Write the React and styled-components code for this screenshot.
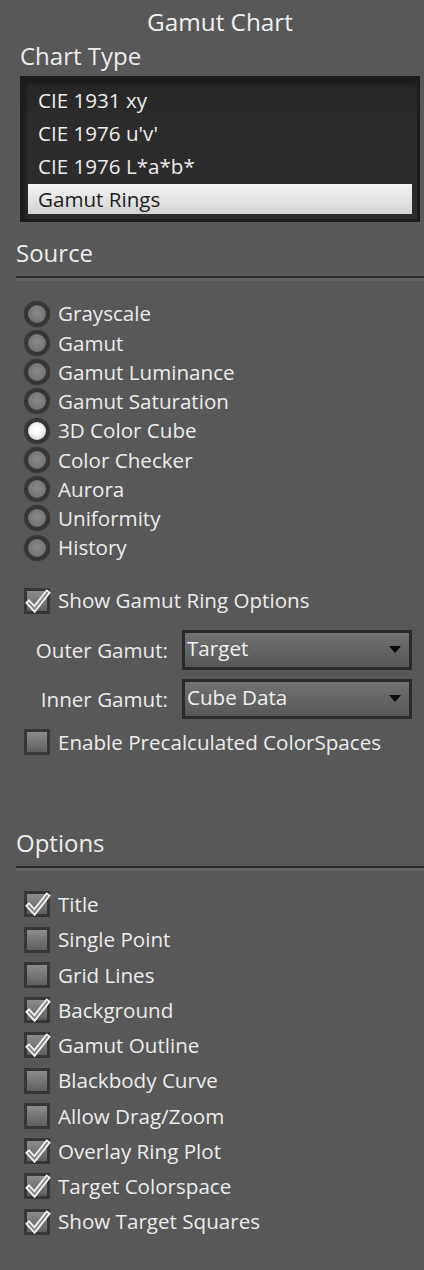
import React from "react";
import styled, { createGlobalStyle } from "styled-components";

const GlobalStyle = createGlobalStyle`
  html, body { margin: 0; padding: 0; background: #585858; }
  body { font-family: "Open Sans", Lato, sans-serif; color: #ececec; }
`;

const Panel = styled.div`
  width: 424px;
  min-height: 1270px;
  display: flex;
  flex-direction: column;
  background: #585858;
`;

const Title = styled.div`
  height: 44px;
  line-height: 44px;
  padding-left: 16px;
  text-align: center;
  font-size: 24.3px;
  color: #f0f0f0;
`;

const SubHeading = styled.div`
  height: 24px;
  line-height: 24px;
  padding-left: 20px;
  font-size: 24px;
`;

const ListBox = styled.div`
  margin: 8px 4px 0 20px;
  height: 146px;
  box-sizing: border-box;
  border: 3px solid #1c1c1c;
  background: linear-gradient(180deg, #242424 0%, #2c2c2c 30%, #2c2c2c 100%);
  box-shadow: inset 3px 3px 4px rgba(0, 0, 0, 0.35);
  padding: 6px 5px 0 5px;
  display: flex;
  flex-direction: column;
  gap: 3px;
`;

const ListItem = styled.div`
  height: 30px;
  line-height: 30px;
  padding-left: 10px;
  font-size: 20.6px;
  color: ${(p) => (p.$selected ? "#1e1e1e" : "#ececec")};
  background: ${(p) =>
    p.$selected ? "linear-gradient(180deg, #f4f4f4 0%, #d4d4d4 100%)" : "transparent"};
`;

const SectionHeader = styled.div`
  margin-top: ${(p) => p.$top}px;
  height: 30px;
  line-height: 30px;
  padding-left: 16px;
  font-size: 24px;
`;

const Rule = styled.div`
  margin: 8px 0 0 16px;
  height: 2px;
  background: #2c2c2c;
  border-bottom: 3px solid #626262;
`;

const RadioList = styled.div`
  margin-top: 18px;
  display: flex;
  flex-direction: column;
`;

const Row = styled.div`
  height: ${(p) => p.$h}px;
  display: flex;
  align-items: center;
  gap: 8px;
  padding-left: 24px;
  font-size: 20.6px;
  margin-top: ${(p) => p.$top || 0}px;
`;

const RadioDot = styled.span`
  width: 26px;
  height: 26px;
  box-sizing: border-box;
  border-radius: 50%;
  border: 4px solid #363636;
  flex: none;
  background: ${(p) =>
    p.$on
      ? "radial-gradient(circle at 50% 45%, #ffffff 0%, #f4f4f4 45%, #bdbdbd 100%)"
      : "radial-gradient(circle at 50% 45%, #8a8a8a 0%, #7a7a7a 50%, #666 100%)"};
  box-shadow: 0 0 1px rgba(0, 0, 0, 0.5);
`;

const Box = styled.span`
  position: relative;
  width: 26px;
  height: 26px;
  box-sizing: border-box;
  border: 3px solid #363636;
  flex: none;
  background: linear-gradient(180deg, #8c8c8c 0%, #767676 50%, #5e5e5e 100%);
`;

const CheckSvg = styled.svg`
  position: absolute;
  left: -3px;
  top: -3px;
  overflow: visible;
`;

const Label = styled.span`
  line-height: 1;
`;

const DropRow = styled.div`
  margin-top: ${(p) => p.$top}px;
  height: 40px;
  display: flex;
  align-items: center;
  gap: 14px;
  font-size: 20.6px;
`;

const DropLabel = styled.span`
  width: 168px;
  text-align: right;
`;

const Select = styled.div`
  width: 230px;
  height: 40px;
  box-sizing: border-box;
  border: 3px solid #2a2a2a;
  background: linear-gradient(180deg, #727272 0%, #646464 50%, #575757 100%);
  display: flex;
  align-items: center;
  justify-content: space-between;
  padding: 0 8px 0 2px;
  color: #f0f0f0;
`;

const SelectText = styled.span`
  margin-top: -3px;
`;

const Arrow = styled.span`
  width: 0;
  height: 0;
  border-left: 6px solid transparent;
  border-right: 6px solid transparent;
  border-top: 7px solid #0a0a0a;
`;

const OptionList = styled.div`
  margin-top: 16px;
  display: flex;
  flex-direction: column;
`;

function Check({ on }) {
  return (
    <Box>
      {on && (
        <CheckSvg width="26" height="26" viewBox="0 0 26 26">
          <path
            d="M5 15 L10.5 21 L23 5"
            fill="none"
            stroke="#f4f4f4"
            strokeWidth="5.5"
            strokeLinejoin="miter"
            strokeLinecap="square"
          />
          <path
            d="M5 15 L10.5 21 L23 5"
            fill="none"
            stroke="#8a8a8a"
            strokeWidth="2"
            strokeLinejoin="miter"
            strokeLinecap="square"
          />
        </CheckSvg>
      )}
    </Box>
  );
}

const chartTypes = ["CIE 1931 xy", "CIE 1976 u'v'", "CIE 1976 L*a*b*", "Gamut Rings"];
const sources = [
  "Grayscale",
  "Gamut",
  "Gamut Luminance",
  "Gamut Saturation",
  "3D Color Cube",
  "Color Checker",
  "Aurora",
  "Uniformity",
  "History",
];
const options = [
  ["Title", true],
  ["Single Point", false],
  ["Grid Lines", false],
  ["Background", true],
  ["Gamut Outline", true],
  ["Blackbody Curve", false],
  ["Allow Drag/Zoom", false],
  ["Overlay Ring Plot", true],
  ["Target Colorspace", true],
  ["Show Target Squares", true],
];

export default function App() {
  return (
    <>
      <GlobalStyle />
      <Panel>
        <Title>Gamut Chart</Title>
        <SubHeading>Chart Type</SubHeading>
        <ListBox>
          {chartTypes.map((t, i) => (
            <ListItem key={t} $selected={i === 3}>
              {t}
            </ListItem>
          ))}
        </ListBox>

        <SectionHeader $top={16}>Source</SectionHeader>
        <Rule />
        <RadioList>
          {sources.map((s) => (
            <Row key={s} $h={29.25}>
              <RadioDot $on={s === "3D Color Cube"} />
              <Label>{s}</Label>
            </Row>
          ))}
        </RadioList>

        <Row $h={35} $top={21}>
          <Check on />
          <Label>Show Gamut Ring Options</Label>
        </Row>
        <DropRow $top={11.5}>
          <DropLabel>Outer Gamut:</DropLabel>
          <Select>
            <SelectText>Target</SelectText>
            <Arrow />
          </Select>
        </DropRow>
        <DropRow $top={9}>
          <DropLabel>Inner Gamut:</DropLabel>
          <Select>
            <SelectText>Cube Data</SelectText>
            <Arrow />
          </Select>
        </DropRow>
        <Row $h={35} $top={6}>
          <Check on={false} />
          <Label>Enable Precalculated ColorSpaces</Label>
        </Row>

        <SectionHeader $top={68}>Options</SectionHeader>
        <Rule />
        <OptionList>
          {options.map(([name, on]) => (
            <Row key={name} $h={35.25}>
              <Check on={on} />
              <Label>{name}</Label>
            </Row>
          ))}
        </OptionList>
      </Panel>
    </>
  );
}
